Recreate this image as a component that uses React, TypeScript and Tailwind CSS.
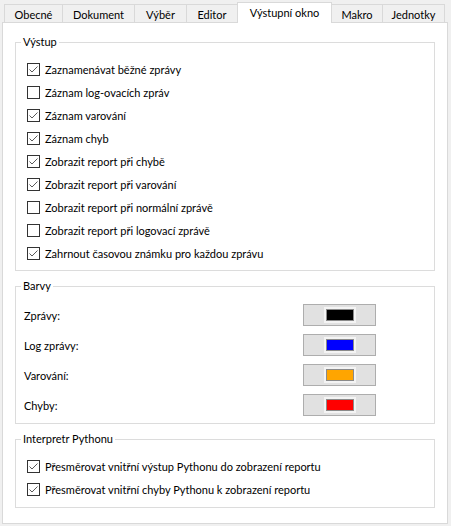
import React from "react";

const font = { fontFamily: 'Lato, "Noto Sans", sans-serif' };

type Tab = { label: string; cls: string; active?: boolean };

const tabs: Tab[] = [
  { label: "Obecné", cls: "w-[58px] border-l" },
  { label: "Dokument", cls: "w-[72px] border-l" },
  { label: "Výběr", cls: "w-[52px] border-l" },
  { label: "Editor", cls: "w-[51px] border-l" },
  { label: "Výstupní okno", cls: "w-[95px] border-l border-r", active: true },
  { label: "Makro", cls: "w-[50px]" },
  { label: "Jednotky", cls: "w-[63px] border-l border-r" },
];

const outputItems: [string, boolean][] = [
  ["Zaznamenávat běžné zprávy", true],
  ["Záznam log-ovacích zpráv", false],
  ["Záznam varování", true],
  ["Záznam chyb", true],
  ["Zobrazit report při chybě", true],
  ["Zobrazit report při varování", true],
  ["Zobrazit report při normální zprávě", false],
  ["Zobrazit report při logovací zprávě", false],
  ["Zahrnout časovou známku pro každou zprávu", true],
];

const colors: [string, string][] = [
  ["Zprávy:", "bg-[#000000]"],
  ["Log zprávy:", "bg-[#0000ff]"],
  ["Varování:", "bg-[#ffa500]"],
  ["Chyby:", "bg-[#ff0000]"],
];

function CheckBox({ checked }: { checked: boolean }) {
  return (
    <div className="w-[13px] h-[13px] border border-[#333333] bg-white shrink-0 flex items-center justify-center">
      {checked && (
        <svg width="11" height="11" viewBox="0 0 11 11">
          <path d="M1.5 5.5 L4 8 L9.5 2.5" fill="none" stroke="#5a5a5a" strokeWidth="1" />
        </svg>
      )}
    </div>
  );
}

function CheckRow({ label, checked }: { label: string; checked: boolean }) {
  return (
    <div className="h-[23px] flex items-center pl-[11px]">
      <CheckBox checked={checked} />
      <span className="ml-[5px] text-[11px] text-black leading-none">{label}</span>
    </div>
  );
}

function Group({ title, className, children }: { title: string; className: string; children: React.ReactNode }) {
  return (
    <div className={"relative border border-[#dcdcdc] " + className}>
      <span className="absolute left-[5px] -top-[9px] bg-white px-[2px] text-[11px] leading-[16px] text-black">
        {title}
      </span>
      {children}
    </div>
  );
}

function ColorButton({ swatch }: { swatch: string }) {
  return (
    <div className="w-[73px] h-[22px] bg-[#e1e1e1] border border-[#adadad] flex items-center justify-center">
      <div className="w-[32px] h-[16px] bg-[#f4f4f4] flex items-center justify-center">
        <div className={"w-[28px] h-[12px] border border-[#8a8a8a] " + swatch} />
      </div>
    </div>
  );
}

export default function App() {
  return (
    <div className="w-[451px] h-[526px] bg-[#f0f0f0] overflow-hidden" style={font}>
      <div className="h-[22px] flex items-end pl-[4px]">
        {tabs.map((t) => (
          <div
            key={t.label}
            className={
              "border-t border-[#d9d9d9] flex justify-center text-[11px] text-black " +
              t.cls +
              (t.active
                ? " h-[21px] -mb-px bg-white relative z-10 pt-[3px]"
                : " h-[18px] bg-[#f0f0f0] pt-[3px]")
            }
          >
            <span className="leading-[14px]">{t.label}</span>
          </div>
        ))}
      </div>
      <div className="ml-[2px] w-[446px] h-[502px] bg-white border border-[#d9d9d9] px-[12px] pt-[19px] flex flex-col gap-[15px]">
        <Group title="Výstup" className="pt-[15px] pb-[5px]">
          {outputItems.map(([label, checked]) => (
            <CheckRow key={label} label={label} checked={checked} />
          ))}
        </Group>

        <Group title="Barvy" className="pt-[13px] pb-[3px]">
          {colors.map(([label, swatch]) => (
            <div key={label} className="h-[30px] flex items-center">
              <span className="w-[287px] pl-[8px] text-[11px] text-black leading-none">{label}</span>
              <ColorButton swatch={swatch} />
            </div>
          ))}
        </Group>

        <Group title="Interpretr Pythonu" className="pt-[15px] pb-[6px]">
          <CheckRow label="Přesměrovat vnitřní výstup Pythonu do zobrazení reportu" checked={true} />
          <CheckRow label="Přesměrovat vnitřní chyby Pythonu k zobrazení reportu" checked={true} />
        </Group>
      </div>
    </div>
  );
}
